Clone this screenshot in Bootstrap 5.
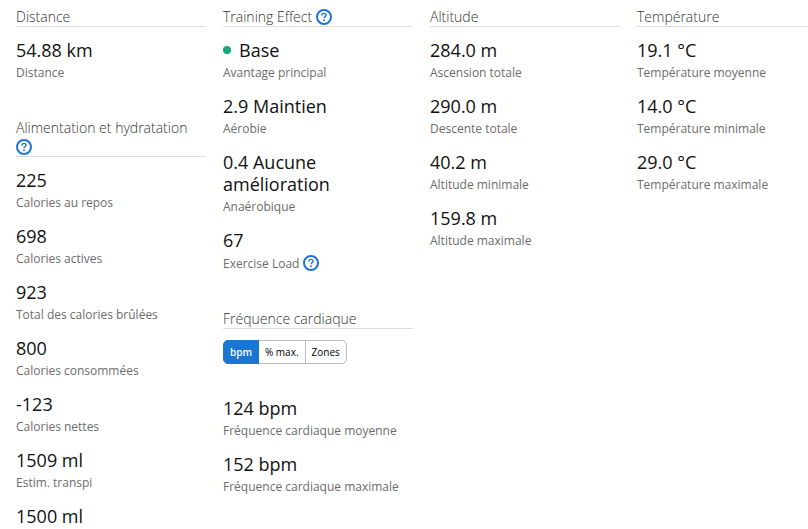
<!DOCTYPE html>
<html lang="fr">
<head>
<meta charset="utf-8">
<meta name="viewport" content="width=device-width, initial-scale=1">
<title>Statistiques de l'activité</title>
<link rel="stylesheet" href="https://cdn.jsdelivr.net/npm/bootstrap@5.3.0/dist/css/bootstrap.min.css">
<style>
body { font-family: "Open Sans", sans-serif; color: #111; background: #fff; }
.stats-grid { display: grid; grid-template-columns: 10fr 10fr 10fr 9fr; column-gap: 17px; padding: 7px 0 0 16px; }
.stats-title { font-size: 14px; line-height: 19px; font-weight: 300; color: #333; border-bottom: 1px solid #ddd; margin-bottom: 12px; }
.stats-section + .stats-section { margin-top: 23px; }
.stat { padding-bottom: 14px; }
.stat-value { font-size: 18px; line-height: 22px; margin-bottom: 4px; }
.stat-name { font-size: 12px; line-height: 16px; color: #6c6c6c; }
.help { line-height: 0; vertical-align: -3px; }
.help svg { display: block; width: 16px; height: 16px; }
.dot { width: 8px; height: 8px; background: #11a979; margin-right: 8px; }
.units-title { margin-bottom: 11px; }
.units { margin-bottom: 33px; }
.units .btn { --bs-btn-font-size: 10px; --bs-btn-line-height: 22px; --bs-btn-padding-y: 0; --bs-btn-padding-x: 6px; --bs-btn-border-color: #bbb; --bs-btn-border-radius: 5px; --bs-btn-color: #000; --bs-btn-active-bg: #1976d2; --bs-btn-active-border-color: #1976d2; --bs-btn-active-color: #fff; }
.units .active { font-weight: 600; }
</style>
</head>
<body>
<svg class="d-none" aria-hidden="true">
  <symbol id="help-icon" viewBox="0 0 16 16">
    <circle cx="8" cy="8" r="7" fill="none" stroke="#1f73d8" stroke-width="2"/>
    <path d="M5.9 6.4C5.9 5.1 6.8 4.4 8 4.4S10.1 5.1 10.1 6.2C10.1 7.5 8 7.6 8 9.3" fill="none" stroke="#1f73d8" stroke-width="1.4"/>
    <circle cx="8" cy="11.3" r=".95" fill="#1f73d8"/>
  </symbol>
</svg>
<main class="stats-grid">
  <div>
    <section class="stats-section">
      <h2 class="stats-title">Distance</h2>
      <div class="stat"><div class="stat-value">54.88 km</div><div class="stat-name">Distance</div></div>
    </section>
    <section class="stats-section">
      <h2 class="stats-title">Alimentation et hydratation <button type="button" class="help btn p-0 border-0" aria-label="Aide"><svg><use href="#help-icon"/></svg></button></h2>
      <div class="stat"><div class="stat-value">225</div><div class="stat-name">Calories au repos</div></div>
      <div class="stat"><div class="stat-value">698</div><div class="stat-name">Calories actives</div></div>
      <div class="stat"><div class="stat-value">923</div><div class="stat-name">Total des calories brûlées</div></div>
      <div class="stat"><div class="stat-value">800</div><div class="stat-name">Calories consommées</div></div>
      <div class="stat"><div class="stat-value">-123</div><div class="stat-name">Calories nettes</div></div>
      <div class="stat"><div class="stat-value">1509 ml</div><div class="stat-name">Estim. transpi</div></div>
      <div class="stat-value mb-0">1500 ml</div>
    </section>
  </div>
  <div>
    <section class="stats-section">
      <h2 class="stats-title">Training Effect <button type="button" class="help btn p-0 border-0" aria-label="Aide"><svg><use href="#help-icon"/></svg></button></h2>
      <div class="stat"><div class="stat-value d-flex align-items-center"><span class="dot rounded-circle"></span>Base</div><div class="stat-name">Avantage principal</div></div>
      <div class="stat"><div class="stat-value">2.9 Maintien</div><div class="stat-name">Aérobie</div></div>
      <div class="stat"><div class="stat-value">0.4 Aucune<br>amélioration</div><div class="stat-name">Anaérobique</div></div>
      <div class="stat"><div class="stat-value">67</div><div class="stat-name">Exercise Load <button type="button" class="help btn p-0 border-0" aria-label="Aide"><svg><use href="#help-icon"/></svg></button></div></div>
    </section>
    <section class="stats-section">
      <h2 class="stats-title units-title">Fréquence cardiaque</h2>
      <div class="units btn-group d-inline-flex" role="group" aria-label="Unité">
        <button type="button" class="btn active" aria-pressed="true">bpm</button>
        <button type="button" class="btn" aria-pressed="false">% max.</button>
        <button type="button" class="btn" aria-pressed="false">Zones</button>
      </div>
      <div class="stat"><div class="stat-value">124 bpm</div><div class="stat-name">Fréquence cardiaque moyenne</div></div>
      <div class="stat"><div class="stat-value">152 bpm</div><div class="stat-name">Fréquence cardiaque maximale</div></div>
    </section>
  </div>
  <section>
    <h2 class="stats-title">Altitude</h2>
    <div class="stat"><div class="stat-value">284.0 m</div><div class="stat-name">Ascension totale</div></div>
    <div class="stat"><div class="stat-value">290.0 m</div><div class="stat-name">Descente totale</div></div>
    <div class="stat"><div class="stat-value">40.2 m</div><div class="stat-name">Altitude minimale</div></div>
    <div class="stat"><div class="stat-value">159.8 m</div><div class="stat-name">Altitude maximale</div></div>
  </section>
  <section>
    <h2 class="stats-title">Température</h2>
    <div class="stat"><div class="stat-value">19.1 °C</div><div class="stat-name">Température moyenne</div></div>
    <div class="stat"><div class="stat-value">14.0 °C</div><div class="stat-name">Température minimale</div></div>
    <div class="stat"><div class="stat-value">29.0 °C</div><div class="stat-name">Température maximale</div></div>
  </section>
</main>
<script src="https://cdn.jsdelivr.net/npm/bootstrap@5.3.0/dist/js/bootstrap.bundle.min.js"></script>
</body>
</html>
